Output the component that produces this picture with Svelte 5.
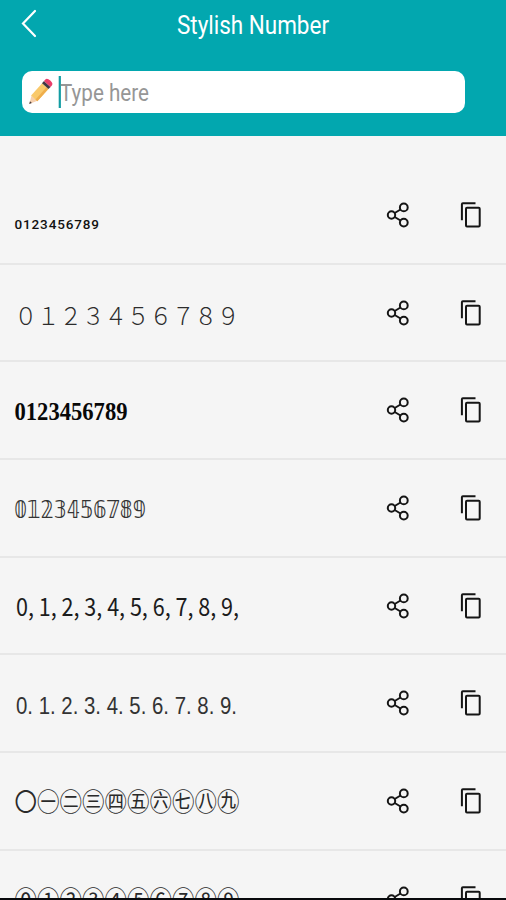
<script>
  const cjk = "'Noto Sans CJK SC', sans-serif";
  const rows = [
    { text: '0123456789', font: "Roboto, sans-serif", size: 13.5, x: 14.5, len: 84.5, y: 93, weight: 500, adjust: 'spacing', color: '#111' },
    { text: '\uFF10\uFF11\uFF12\uFF13\uFF14\uFF15\uFF16\uFF17\uFF18\uFF19', font: cjk, size: 24, x: 14.5, len: 225, y: 59.5, weight: 300, color: '#2c2c2c' },
    { text: '0123456789', font: "'Liberation Serif', serif", size: 25, x: 14.5, len: 113, y: 58, weight: 700, color: '#080808' },
    { text: '𝟘𝟙𝟚𝟛𝟜𝟝𝟞𝟟𝟠𝟡', font: "'DejaVu Sans', sans-serif", size: 24, x: 14, len: 132, y: 58, weight: 400, color: '#333' },
    { text: '0, 1, 2, 3, 4, 5, 6, 7, 8, 9,', font: cjk, size: 24.5, x: 16, len: 223, y: 58, weight: 400 },
    { text: '0. 1. 2. 3. 4. 5. 6. 7. 8. 9.', font: "'Liberation Sans', sans-serif", size: 24.5, x: 16, len: 221, y: 59, weight: 400, color: '#333' },
    { text: '〇㊀㊁㊂㊃㊄㊅㊆㊇㊈', font: cjk, size: 25, x: 14.5, len: 225, y: 57.5, weight: 400, color: '#2a2a2a' },
    { text: '⓪①②③④⑤⑥⑦⑧⑨', font: cjk, size: 25, x: 14.5, len: 225, y: 57.5, weight: 400, color: '#2a2a2a' }
  ];
</script>

<main>
  <header>
    <div class="bar">
      <svg class="back" width="18" height="30" viewBox="0 0 18 30"><path d="M15 2 3 14.5 15 27" fill="none" stroke="#fff" stroke-width="2.2" stroke-linecap="round" /></svg>
      <svg class="title" width="170" height="44"><text x="4" y="25" textLength="152" lengthAdjust="spacingAndGlyphs">Stylish Number</text></svg>
    </div>
    <div class="field">
      <svg width="150" height="42" viewBox="0 0 150 42">
        <g transform="translate(7.2 33) rotate(-48)">
          <path d="M0 0 8-4V4Z" fill="#f6d0ae" />
          <path d="M0 0 2.6-1.3V1.3Z" fill="#493b3c" />
          <path d="M7.5-4.2H24V4.2H7.5Z" fill="#f9c96b" />
          <path d="M7.5 1.7H24V4.2H7.5Z" fill="#efae4c" />
          <path d="M24-4.4H27V4.4H24Z" fill="#3f3844" />
          <path d="M27-4.4H29Q31.5-4.4 31.5 0T29 4.4H27Z" fill="#e83e6b" />
        </g>
        <rect x="36.7" y="5" width="2.2" height="32" fill="#139da3" />
        <text class="hint" x="38" y="30" textLength="89" lengthAdjust="spacingAndGlyphs">Type here</text>
      </svg>
    </div>
  </header>
  <ul>
    {#each rows as row, i}
      <li class:first={i === 0}>
        <svg class="sample" width="370" height="97">
          <text x={row.x} y={row.y} textLength={row.len} lengthAdjust={row.adjust ?? 'spacingAndGlyphs'} font-family={row.font} font-size={row.size} font-weight={row.weight} fill={row.color ?? '#1c1c1c'}>{row.text}</text>
        </svg>
        <div class="actions">
          <svg width="24" height="28" viewBox="0 0 24 28" fill="none" stroke="#151515" stroke-width="2">
            <circle cx="5.5" cy="14" r="3.7" />
            <circle cx="17.8" cy="6.4" r="3.9" />
            <circle cx="17.8" cy="21.6" r="3.9" />
            <path d="m8.7 12 5.8-3.5M8.7 16l5.8 3.5" />
          </svg>
          <svg width="22" height="28" viewBox="0 0 22 28" fill="none" stroke="#151515" stroke-width="2">
            <path d="M1.9 19.2V3.2Q1.9 2.2 2.9 2.2H15.5" />
            <rect x="6" y="6.8" width="13.7" height="18.8" rx="1" />
          </svg>
        </div>
      </li>
    {/each}
  </ul>
</main>

<style>
  :global(body) { margin: 0; }
  main {
    box-sizing: border-box;
    width: 506px;
    height: 900px;
    overflow: hidden;
    background: #f5f5f5;
    border-bottom: 2px solid #08090c;
    font-family: Roboto, sans-serif;
  }
  header {
    box-sizing: border-box;
    height: 135.5px;
    background: #02a7af;
  }
  svg { display: block; flex: none; overflow: visible; }
  .bar { display: flex; height: 71px; padding: 9px 0 0 20px; box-sizing: border-box; }
  .title { margin-left: 135px; }
  .title text { font-size: 25px; fill: #fff; }
  .field {
    width: 443px;
    height: 41.5px;
    margin-left: 21.5px;
    border-radius: 10px;
    background: #fff;
  }
  .hint { font-size: 24px; fill: #969696; }
  ul { list-style: none; margin: 0; padding: 0; }
  li {
    box-sizing: border-box;
    height: 97.7px;
    display: flex;
    border-bottom: 2px solid #e7e7e7;
  }
  li.first { height: 129px; }
  .actions { display: flex; gap: 50px; padding: 34px 0 0 16px; }
  .first .actions { padding-top: 65.5px; }
</style>
